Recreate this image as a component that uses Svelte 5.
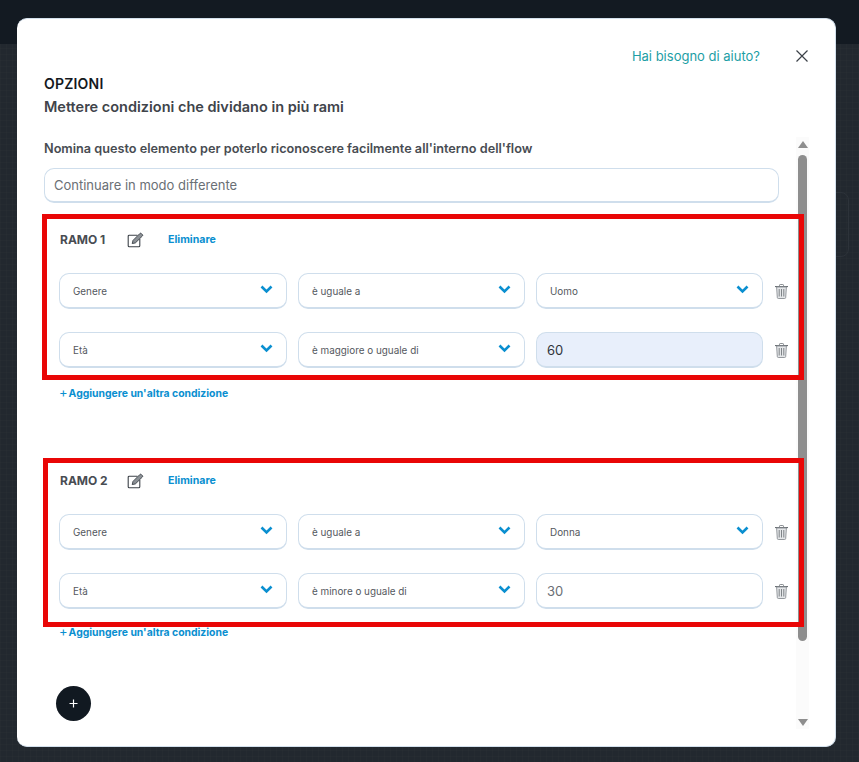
<script>
	const branches = [
		{
			name: 'RAMO 1',
			cls: 'first',
			rows: [
				{ field: 'Genere', op: 'è uguale a', value: 'Uomo' },
				{ field: 'Età', op: 'è maggiore o uguale di', input: '60', filled: true }
			]
		},
		{
			name: 'RAMO 2',
			cls: 'second',
			rows: [
				{ field: 'Genere', op: 'è uguale a', value: 'Donna' },
				{ field: 'Età', op: 'è minore o uguale di', input: '30' }
			]
		}
	];
</script>

{#snippet chevron()}
	<svg class="chevron" width="13" height="9" viewBox="0 0 13 9" fill="none">
		<path d="M1.5 1.5 6.5 6.5 11.5 1.5" stroke="#0a8fd0" stroke-width="2.6" />
	</svg>
{/snippet}

{#snippet select(text)}
	<div class="select">
		<span>{text}</span>
		{@render chevron()}
	</div>
{/snippet}

<div class="page">
	<div class="topbar"></div>
	<div class="backcard"></div>

	<div class="modal">
		<div class="top">
			<a class="help" href="#help">Hai bisogno di aiuto?</a>
			<svg class="close" width="12" height="12" viewBox="0 0 12 12" fill="none">
				<path d="M.5.5l11 11M11.5.5l-11 11" stroke="#3b4148" stroke-width="1.2" />
			</svg>
		</div>
		<h1>OPZIONI</h1>
		<h2>Mettere condizioni che dividano in più rami</h2>

		<div class="body">
			<div class="scrollbar">
				<i class="arrow up"></i>
				<i class="thumb"></i>
				<i class="arrow down"></i>
			</div>

			<p class="label">Nomina questo elemento per poterlo riconoscere facilmente all'interno dell'flow</p>
			<div class="name-input">Continuare in modo differente</div>

			{#each branches as branch}
				<section class="branch {branch.cls}">
					<div class="branch-head">
						<strong>{branch.name}</strong>
						<svg class="edit" width="17" height="16" viewBox="0 0 17 16" fill="none">
							<path d="M10.5 3.2H2.2a1 1 0 0 0-1 1v9.6a1 1 0 0 0 1 1h9.6a1 1 0 0 0 1-1V7" stroke="#3c4248" stroke-width="1.1" />
							<path d="M5.2 11.6 6 8.4 12.9 1.5a1 1 0 0 1 1.4 0l1.1 1.1a1 1 0 0 1 0 1.4L8.4 10.9z" fill="#8b9095" stroke="#3c4248" stroke-width=".9" />
						</svg>
						<a class="remove" href="#remove">Eliminare</a>
					</div>
					{#each branch.rows as row}
						<div class="row">
							{@render select(row.field)}
							{@render select(row.op)}
							{#if row.input}
								<div class="value" class:filled={row.filled}>{row.input}</div>
							{:else}
								{@render select(row.value)}
							{/if}
							<svg class="trash" width="13" height="15" viewBox="0 0 13 15" fill="none">
								<path d="M0 2.6h13" stroke="#5b6066" stroke-width="1" />
								<path d="M4.5 2.4V1.2q0-.7.7-.7h2.6q.7 0 .7.7v1.2" stroke="#7c8186" stroke-width=".9" />
								<path d="M1.6 3h9.8l-.7 10.5q-.1 1-1 1H3.3q-.9 0-1-1z" fill="#e4e6e8" stroke="#8a8f94" stroke-width=".9" />
								<path d="M4.2 5v7.5M6.5 5v7.5M8.8 5v7.5" stroke="#73787d" stroke-width=".9" />
							</svg>
						</div>
					{/each}
				</section>
				<a class="add" class:add-second={branch.cls === 'second'} href="#add"><b>+</b>Aggiungere un'altra condizione</a>
			{/each}

			<button class="plus" aria-label="Aggiungere">
				<svg width="9" height="9" viewBox="0 0 9 9" fill="none">
					<path d="M4.5.5v8M.5 4.5h8" stroke="#fff" stroke-width="1.2" />
				</svg>
			</button>
		</div>
	</div>
</div>

<style>
	:global(body) {
		margin: 0;
		background: #22282f;
	}

	.page {
		position: relative;
		height: 762px;
		overflow: hidden;
		font-family: Inter, "Liberation Sans", sans-serif;
		background-color: #22282f;
		background-image:
			linear-gradient(rgba(255, 255, 255, 0.012) 1px, transparent 1px),
			linear-gradient(90deg, rgba(255, 255, 255, 0.012) 1px, transparent 1px);
		background-size: 6px 6px;
	}

	.topbar {
		height: 44px;
		background: #131a22;
	}

	.backcard {
		position: absolute;
		left: 800px;
		top: 192px;
		width: 47px;
		height: 63px;
		border: 1px solid #2d333a;
		border-radius: 8px;
	}

	.modal {
		position: absolute;
		left: 17px;
		top: 18px;
		width: 819px;
		height: 729px;
		box-sizing: border-box;
		padding: 0 27px;
		background: #fff;
		border-radius: 10px;
		border: 1px solid #d3e0ec;
		border-width: 1px 1px 1px 0;
		overflow: hidden;
	}

	.top {
		display: flex;
		justify-content: flex-end;
		align-items: center;
		gap: 36px;
		height: 28px;
		margin-top: 23px;
	}

	.help {
		color: #1d9ea5;
		font-size: 13px;
		text-decoration: none;
		line-height: 28px;
	}

	.close {
		flex: none;
	}

	h1 {
		margin: 5px 0 0;
		font-size: 14px;
		line-height: 17px;
		font-weight: 600;
		letter-spacing: 0.2px;
		color: #15191e;
	}

	h2 {
		margin: 6px 0 0;
		font-size: 14.5px;
		line-height: 17px;
		font-weight: 600;
		color: #40444a;
	}

	.body {
		position: relative;
		margin: 22px -27px 0 0;
		height: 600px;
	}

	.scrollbar {
		position: absolute;
		left: 752px;
		top: 0;
		width: 13px;
		height: 592px;
		background: #fbfbfb;
		display: flex;
		flex-direction: column;
		align-items: center;
	}

	.thumb {
		width: 9px;
		height: 486px;
		margin-top: 7px;
		background: #8e8e8e;
		border-radius: 5px;
	}

	.arrow {
		width: 0;
		height: 0;
		border-left: 5px solid transparent;
		border-right: 5px solid transparent;
	}

	.arrow.up {
		margin-top: 4px;
		border-bottom: 7px solid #8e8e8e;
	}

	.arrow.down {
		margin-top: auto;
		margin-bottom: 3px;
		border-top: 7px solid #8e8e8e;
	}

	.label {
		position: relative;
		margin: 0;
		padding-top: 3px;
		font-size: 12.7px;
		line-height: 18px;
		font-weight: 600;
		color: #484c52;
	}

	.name-input {
		position: relative;
		box-sizing: border-box;
		width: 735px;
		height: 35px;
		margin-top: 10px;
		padding-left: 9px;
		border: 1px solid #cfdeec;
		border-bottom-width: 2px;
		border-radius: 10px;
		font-size: 13px;
		line-height: 33px;
		color: #6a6f75;
		background: #fff;
	}

	.branch {
		position: relative;
		box-sizing: border-box;
		width: 762px;
		border: 5px solid #e90606;
		padding: 0 0 0 12px;
	}

	.branch.first {
		margin: 11px 0 0 -2px;
		height: 166px;
	}

	.branch.second {
		margin: 57px 0 0 -1px;
		width: 761px;
		height: 169px;
		padding-left: 11px;
	}

	.branch-head {
		display: flex;
		align-items: center;
		height: 17px;
		margin-top: 12px;
		margin-bottom: 25px;
		padding-left: 1px;
		color: #484c52;
	}

	.second .branch-head {
		margin-top: 9px;
	}

	.branch-head strong {
		width: 67px;
		font-size: 12px;
		font-weight: 700;
	}

	.edit {
		flex: none;
	}

	.remove {
		margin-left: 24px;
		color: #0a8fd0;
		font-size: 10.6px;
		font-weight: 700;
		text-decoration: none;
	}

	.row {
		display: flex;
		align-items: center;
		gap: 11px;
		margin-bottom: 23px;
	}

	.select,
	.value {
		box-sizing: border-box;
		width: 227px;
		height: 36px;
		border: 1px solid #cfdeec;
		border-bottom-width: 2px;
		border-radius: 10px;
		flex: none;
	}

	.select:first-child {
		width: 228px;
	}

	.select {
		display: flex;
		align-items: center;
		justify-content: space-between;
		padding: 0 13px 0 13px;
		font-size: 9.9px;
		color: #54585e;
		background: #fff;
	}

	.chevron {
		margin-top: -3px;
	}

	.value {
		padding-left: 10px;
		font-size: 13px;
		line-height: 34px;
		color: #6a6f75;
		background: #fff;
	}

	.value.filled {
		background: #e8effb;
		color: #30353b;
	}

	.trash {
		flex: none;
		margin-left: 1px;
	}

	.add {
		position: relative;
		display: block;
		margin: 5px 0 0 15px;
		font-size: 10.4px;
		line-height: 14px;
		font-weight: 700;
		color: #0a8fd0;
		text-decoration: none;
	}

	.add b {
		font-weight: 400;
		font-size: 13px;
		margin-right: 1px;
	}

	.add-second {
		margin-top: -3px;
	}

	.plus {
		display: flex;
		align-items: center;
		justify-content: center;
		width: 35px;
		height: 35px;
		margin: 46px 0 0 12px;
		padding: 0;
		border: 0;
		border-radius: 50%;
		background: #111921;
	}
</style>
